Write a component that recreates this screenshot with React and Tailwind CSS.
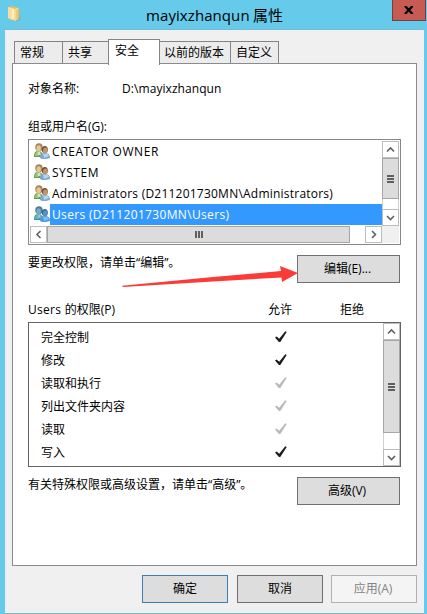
import clsx from "clsx";

const tabs = [
  { label: "常规", box: "w-[49px] pl-[5px]" },
  { label: "共享", box: "-ml-px w-[47px] pl-[5px]" },
  { label: "安全", active: true },
  { label: "以前的版本", box: "-ml-px w-[72px] pl-[4px]" },
  { label: "自定义", box: "-ml-px w-[49px] pl-[5px]" },
];

const groups = [
  { name: "CREATOR OWNER", tracking: "tracking-[0.6px]" },
  { name: "SYSTEM", tracking: "tracking-[0.5px]" },
  { name: "Administrators (D211201730MN\\Administrators)", tracking: "tracking-[0.225px]" },
  { name: "Users (D211201730MN\\Users)", tracking: "tracking-[0.34px]", selected: true },
];

const permissions = [
  { name: "完全控制", explicit: true },
  { name: "修改", explicit: true },
  { name: "读取和执行" },
  { name: "列出文件夹内容" },
  { name: "读取" },
  { name: "写入", explicit: true },
];

function FolderIcon() {
  return (
    <svg width="14" height="17" viewBox="0 0 14 17">
      <path d="M9 6l4 5v3l-5 2z" fill="#8fa9a5" opacity=".6" />
      <path d="M0 1l5-1 6 2v10l-4 3-7-3z" fill="#e3bd62" />
      <path d="M0 1l4 1v12l-4-2z" fill="#f6dfa0" />
      <path d="M5 3l5-1v11l-3 2-2-3z" fill="#f5dc8f" />
      <path d="M4 2l2 1v11l-2-1z" fill="#fff0bd" />
      <path d="M8 4l2-1v9l-2 2z" fill="#edca70" />
    </svg>
  );
}

function UsersIcon({ selected }) {
  return (
    <svg width="16" height="16" viewBox="0 0 16 16" className="shrink-0">
      <path d="M0 14c0-4 1-6 4-6s5 2 5 6z" fill={selected ? "#3f96a0" : "#669b48"} />
      <path d="M1 13c0-3 1-4 2-4l2 4z" fill={selected ? "#67b5b5" : "#9bc978"} />
      <ellipse cx="5" cy="4.2" rx="3.7" ry="4" fill={selected ? "#477f9f" : "#a98456"} />
      <ellipse cx="4.7" cy="5.2" rx="2.2" ry="3" fill={selected ? "#80a9c2" : "#e5c69b"} />
      <path d="M3 8l2 1 1-1 1 4H4z" fill={selected ? "#8fc8cf" : "#d8e3bd"} />
      <path d="M6 15c0-4 1-5 4.500-5s5.500 1 5.500 5l-4 1H8z" fill={selected ? "#4f9be0" : "#7ba8d2"} />
      <path d="M9 10l2 1 2-1 2 3-5 2z" fill={selected ? "#7bbdf2" : "#b3d5f0"} />
      <ellipse cx="10.8" cy="6.5" rx="3" ry="3.6" fill={selected ? "#2f6ca6" : "#6d4f34"} />
      <ellipse cx="11.3" cy="7.5" rx="2.3" ry="2.9" fill={selected ? "#5d91bd" : "#c2946d"} />
    </svg>
  );
}

function Check({ explicit }) {
  return (
    <svg width="12" height="12" viewBox="0 0 12 12">
      <path
        d="M0 6.600L1.700 5.400 4.200 7.700 10.300.3l1.400.8L5.300 10.900H3.900z"
        fill={explicit ? "#1c1c1c" : "#b9b9b9"}
      />
    </svg>
  );
}

const arrows = {
  up: "M5 10.500L8.500 7l3.500 3.500",
  down: "M5 7l3.500 3.500L12 7",
  left: "M10.500 5L7 8.500l3.500 3.500",
  right: "M7 5l3.500 3.500L7 12",
};

function ScrollButton({ dir }) {
  return (
    <svg width="17" height="17" viewBox="0 0 17 17" className="block shrink-0">
      <rect x=".5" y=".5" width="16" height="16" fill="#fff" stroke="#bdbdbd" />
      <path d={arrows[dir]} fill="none" stroke="#606060" strokeWidth="1.600" />
    </svg>
  );
}

function VerticalScroll({ thumb }) {
  return (
    <div className="flex w-[17px] shrink-0 flex-col border-x border-[#d0d0d0] bg-white">
      <div className="-mx-px">
        <ScrollButton dir="up" />
      </div>
      <div
        className={clsx(
          "-mx-px flex flex-col items-center justify-center gap-px border border-[#a6a6a6] bg-[#dcdcdc]",
          thumb,
        )}
      >
        <i className="h-[2px] w-[7px] bg-[#606060]" />
        <i className="h-[2px] w-[7px] bg-[#606060]" />
        <i className="h-[2px] w-[7px] bg-[#606060]" />
      </div>
      <div className="-mx-px mt-auto">
        <ScrollButton dir="down" />
      </div>
    </div>
  );
}

function Button({ children, className }) {
  return (
    <button
      className={clsx("flex h-7 items-center justify-center border pb-px", className)}
    >
      {children}
    </button>
  );
}

export default function App() {
  return (
    <div className="relative flex h-[614px] w-[427px] flex-col overflow-hidden bg-[#66cbea] font-['Open_Sans','Noto_Sans_CJK_SC',sans-serif] text-[12px] leading-4 whitespace-pre text-black">
      {/* Title bar */}
      <header className="flex h-[29px] shrink-0 pl-2">
        <div className="w-[138px] pt-[6px]">
          <FolderIcon />
        </div>
        <h1 className="flex flex-1 pt-[5px] text-[15px] leading-5">
          <span className="w-[107px] tracking-[0.08px]">mayixzhanqun</span>
          <span>属性</span>
        </h1>
        <button className="mr-px flex h-[21px] w-[34px] items-center justify-center border border-t-0 border-[#713f40] bg-[#c75b53]">
          <svg width="10" height="8" viewBox="0 0 10 8">
            <path d="M1 0l7.500 8M8.500 0L1 8" stroke="#000" strokeWidth="2.300" />
          </svg>
        </button>
      </header>

      <main className="mr-[3px] ml-[5px] flex h-[585px] flex-col border-y border-[#78b9d0] bg-[#f0f0f0]">
        {/* Tabs */}
        <nav className="mt-[9px] ml-[9px] flex h-[24px] items-end">
          {tabs.map((tab) => (
            <div
              key={tab.label}
              className={clsx(
                "border border-b-0 border-[#83838c]",
                tab.active
                  ? "relative z-10 -mb-[2px] -ml-px h-[26px] w-[52px] bg-white pt-[3px] pl-[6px]"
                  : "h-[22px] bg-[#ececec] pt-[3px]",
                tab.box,
              )}
            >
              {tab.label}
            </div>
          ))}
        </nav>

        <section className="mr-[7px] ml-[7px] flex h-[503px] shrink-0 flex-col border border-[#8a8a91] bg-white pr-[15px] pl-[15px]">
          <div className="flex pt-[17px]">
            <span className="w-[94px]">对象名称:</span>
            <span className="tracking-[0.07px]">D:\mayixzhanqun</span>
          </div>

          <div className="mt-[22px]">组或用户名(G):</div>

          <div className="mt-1 flex h-[106px] shrink-0 flex-col border border-[#828790] p-px">
            <div className="flex h-[85px]">
              <div className="w-[352px]">
                {groups.map((g) => (
                  <div key={g.name} className="flex h-[21px]">
                    <div className="w-5 pt-[2px] pl-1">
                      <UsersIcon selected={g.selected} />
                    </div>
                    <div
                      className={clsx(
                        "flex-1 pt-[3px] pl-[2px]",
                        g.tracking,
                        g.selected && "bg-[#3399ff] text-white",
                      )}
                    >
                      {g.name}
                    </div>
                  </div>
                ))}
              </div>
              <VerticalScroll thumb="h-[41px]" />
            </div>
            <div className="flex h-[17px] bg-[#f0f0f0]">
              <div className="flex w-[352px] bg-white">
                <ScrollButton dir="left" />
                <div className="flex w-[303px] items-center justify-center gap-px border border-[#a6a6a6] bg-[#dcdcdc]">
                  <i className="h-[7px] w-[2px] bg-[#606060]" />
                  <i className="h-[7px] w-[2px] bg-[#606060]" />
                  <i className="h-[7px] w-[2px] bg-[#606060]" />
                </div>
                <div className="ml-auto">
                  <ScrollButton dir="right" />
                </div>
              </div>
            </div>
          </div>

          <div className="flex justify-between pt-[10px] pr-px">
            <span>要更改权限，请单击“编辑”。</span>
            <Button className="w-[103px] border-[#707070] bg-[#dddddd] pr-[2px]">编辑(E)...</Button>
          </div>

          <div className="mt-[19px] flex">
            <span className="w-[240px]">
              <span className="tracking-[0.3px]">Users </span>的权限(P)
            </span>
            <span className="w-[72px]">允许</span>
            <span>拒绝</span>
          </div>

          <div className="mt-1 flex h-[145px] shrink-0 border border-[#646464]">
            <div className="flex-1 pt-[3px] pl-3">
              {permissions.map((p) => (
                <div key={p.name} className="flex h-[23px] items-center">
                  <span className="w-[234px]">{p.name}</span>
                  <div className="-mt-[2px]">
                    <Check explicit={p.explicit} />
                  </div>
                </div>
              ))}
            </div>
            <VerticalScroll thumb="h-[93px]" />
          </div>

          <div className="flex justify-between pt-[10px] pr-px">
            <span>有关特殊权限或高级设置，请单击“高级”。</span>
            <Button className="w-[103px] border-[#707070] bg-[#dddddd] pr-[3px]">高级(V)</Button>
          </div>
        </section>

        <footer className="flex justify-end pt-[9px] pr-[7px]">
          <Button className="w-[86px] border-[#3c7fb1] bg-[#dddddd]">确定</Button>
          <Button className="ml-[9px] w-[86px] border-[#707070] bg-[#dddddd]">取消</Button>
          <Button className="ml-2 w-[86px] border-[#adb2b5] bg-[#f4f4f4] pr-[2px] text-[#838383]">
            应用(A)
          </Button>
        </footer>
      </main>

      {/* Red pointer towards the edit button */}
      <svg className="absolute top-[264px] left-[120px]" width="180" height="26" viewBox="0 0 180 26">
        <path d="M2 21.800L93 13l68-6-1-5 18 7-16 9-.5-4.500L93 17.500 3 23z" fill="#fb3b38" />
      </svg>
    </div>
  );
}
